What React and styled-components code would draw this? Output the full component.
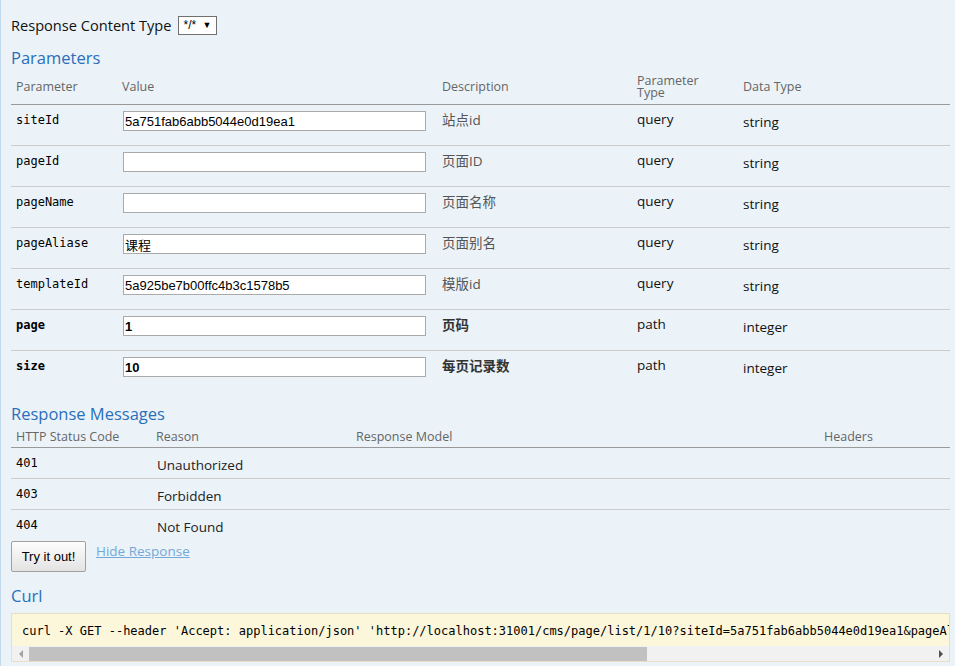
import React from 'react';
import styled, { createGlobalStyle } from 'styled-components';

const GlobalStyle = createGlobalStyle`
  html, body {
    margin: 0;
    padding: 0;
    background: #ebf3f9;
  }
  body {
    font-family: "Open Sans", "Noto Sans CJK SC", sans-serif;
    color: #222;
  }
`;

const parametros = [
  { nombre: 'siteId', valor: '5a751fab6abb5044e0d19ea1', descripcion: '站点id', tipo: 'query', dato: 'string' },
  { nombre: 'pageId', valor: '', descripcion: '页面ID', tipo: 'query', dato: 'string' },
  { nombre: 'pageName', valor: '', descripcion: '页面名称', tipo: 'query', dato: 'string' },
  { nombre: 'pageAliase', valor: '课程', descripcion: '页面别名', tipo: 'query', dato: 'string' },
  { nombre: 'templateId', valor: '5a925be7b00ffc4b3c1578b5', descripcion: '模版id', tipo: 'query', dato: 'string' },
  { nombre: 'page', valor: '1', descripcion: '页码', tipo: 'path', dato: 'integer', requerido: true },
  { nombre: 'size', valor: '10', descripcion: '每页记录数', tipo: 'path', dato: 'integer', requerido: true },
];

const respuestas = [
  { codigo: '401', razon: 'Unauthorized' },
  { codigo: '403', razon: 'Forbidden' },
  { codigo: '404', razon: 'Not Found' },
];

const curl = "curl -X GET --header 'Accept: application/json' 'http://localhost:31001/cms/page/list/1/10?siteId=5a751fab6abb5044e0d19ea1&pageAliase=%E8%AF%BE%E7%A8%8B&templateId=5a925be7b00ffc4b3c1578b5'";

function App() {
  return (
    <>
      <GlobalStyle />
      <Operacion>

        <TipoContenido>
          <span>Response Content Type</span>
          <Selector>
            <SelectorValor>*/*</SelectorValor>
            <SelectorFlecha>▼</SelectorFlecha>
          </Selector>
        </TipoContenido>

        <Titulo $arriba={10}>Parameters</Titulo>
        <FilaParametroCabecera>
          <CeldaCabecera>Parameter</CeldaCabecera>
          <CeldaCabecera>Value</CeldaCabecera>
          <CeldaCabecera>Description</CeldaCabecera>
          <CeldaCabecera>Parameter<br />Type</CeldaCabecera>
          <CeldaCabecera>Data Type</CeldaCabecera>
        </FilaParametroCabecera>

        {parametros.map((p, i) => (
          <FilaParametro key={p.nombre} $ultima={i === parametros.length - 1}>
            <NombreParametro $requerido={p.requerido}>{p.nombre}</NombreParametro>
            <Celda>
              <CampoValor defaultValue={p.valor} $requerido={p.requerido} />
            </Celda>
            <Descripcion $requerido={p.requerido}>{p.descripcion}</Descripcion>
            <CeldaTexto>{p.tipo}</CeldaTexto>
            <CeldaTexto $bajar>{p.dato}</CeldaTexto>
          </FilaParametro>
        ))}

        <Titulo $arriba={12}>Response Messages</Titulo>
        <FilaRespuestaCabecera>
          <CeldaCabecera>HTTP Status Code</CeldaCabecera>
          <CeldaCabecera>Reason</CeldaCabecera>
          <CeldaCabecera>Response Model</CeldaCabecera>
          <CeldaCabecera>Headers</CeldaCabecera>
        </FilaRespuestaCabecera>

        {respuestas.map((r, i) => (
          <FilaRespuesta key={r.codigo} $ultima={i === respuestas.length - 1}>
            <CodigoRespuesta>{r.codigo}</CodigoRespuesta>
            <RazonRespuesta>{r.razon}</RazonRespuesta>
            <div />
            <div />
          </FilaRespuesta>
        ))}

        <Acciones>
          <BotonProbar>Try it out!</BotonProbar>
          <EnlaceOcultar href="#">Hide Response</EnlaceOcultar>
        </Acciones>

        <Titulo $arriba={13}>Curl</Titulo>
        <CajaCurl>
          <CodigoCurl>{curl}</CodigoCurl>
          <BarraDesplazamiento>
            <BotonBarra><Flecha $direccion="izquierda" /></BotonBarra>
            <PulgarBarra />
            <BotonBarra><Flecha $direccion="derecha" /></BotonBarra>
          </BarraDesplazamiento>
        </CajaCurl>

      </Operacion>
    </>
  );
}


const Operacion = styled.div`
  box-sizing: border-box;
  min-height: 100vh;
  padding: 13px 0 0 10px;
  border-left: 1px solid #c3d9ec;
  overflow: hidden;
`;

const TipoContenido = styled.div`
  display: flex;
  align-items: center;
  gap: 6px;
  height: 24px;
  font-size: 14.6px;
  color: #111;
`;

const Selector = styled.div`
  display: flex;
  align-items: center;
  box-sizing: border-box;
  height: 19px;
  width: 39px;
  padding: 0 4px 0 5px;
  border: 1px solid #707070;
  background: #fff;
  font-family: "Liberation Sans", Arial, sans-serif;
  font-size: 12px;
  color: #000;
`;

const SelectorValor = styled.span`
  flex: 1;
`;

const SelectorFlecha = styled.span`
  font-size: 9px;
`;

const Titulo = styled.h4`
  margin: ${p => p.$arriba}px 0 0 0;
  font-size: 16.5px;
  font-weight: normal;
  line-height: 22px;
  color: #2a6fbb;
`;

const columnasParametros = '106px 320px 195px 106px 1fr';
const columnasRespuestas = '140px 200px 468px 1fr';

const FilaParametroCabecera = styled.div`
  display: grid;
  grid-template-columns: ${columnasParametros};
  align-items: center;
  height: 35px;
  margin-right: 5px;
  border-bottom: 1px solid #999;
`;

const FilaRespuestaCabecera = styled.div`
  display: grid;
  grid-template-columns: ${columnasRespuestas};
  align-items: end;
  box-sizing: border-box;
  height: 23px;
  padding-bottom: 4px;
  margin-right: 5px;
  border-bottom: 1px solid #999;
`;

const CeldaCabecera = styled.div`
  padding-left: 5px;
  font-size: 12.5px;
  line-height: 12px;
  color: #666;
`;

const FilaParametro = styled.div`
  display: grid;
  grid-template-columns: ${columnasParametros};
  align-items: start;
  height: 40px;
  margin-right: 5px;
  border-bottom: ${p => (p.$ultima ? 'none' : '1px solid #ccc')};
`;

const Celda = styled.div`
  padding: 6px 0 0 5px;
`;

const NombreParametro = styled.div`
  padding: 7px 0 0 5px;
  font-family: "DejaVu Sans Mono", "Liberation Mono", monospace;
  font-size: 12px;
  line-height: 16px;
  font-weight: ${p => (p.$requerido ? 'bold' : 'normal')};
  color: #000;
`;

const CampoValor = styled.input`
  box-sizing: border-box;
  display: block;
  width: 303px;
  height: 20px;
  margin-left: 1px;
  padding: 0 1px;
  border: 1px solid #aaa;
  background: #fff;
  outline: none;
  font-family: "Liberation Sans", Arial, "Noto Sans CJK SC", sans-serif;
  font-size: 13px;
  font-weight: ${p => (p.$requerido ? 'bold' : 'normal')};
  color: #000;
`;

const Descripcion = styled.div`
  padding: 7px 0 0 5px;
  font-size: 13.5px;
  line-height: 16px;
  font-weight: ${p => (p.$requerido ? 'bold' : 'normal')};
  color: ${p => (p.$requerido ? '#333' : '#555')};
`;

const CeldaTexto = styled.div`
  padding: ${p => (p.$bajar ? '9px' : '6px')} 0 0 5px;
  font-size: 13.5px;
  line-height: 16px;
  color: #111;
`;

const FilaRespuesta = styled.div`
  display: grid;
  grid-template-columns: ${columnasRespuestas};
  align-items: center;
  height: 30px;
  margin-right: 5px;
  border-bottom: ${p => (p.$ultima ? 'none' : '1px solid #ccc')};
`;

const CodigoRespuesta = styled.div`
  padding: 0 0 0 5px;
  font-family: "DejaVu Sans Mono", "Liberation Mono", monospace;
  font-size: 12px;
  color: #000;
`;

const RazonRespuesta = styled.div`
  padding: 4px 0 0 6px;
  font-size: 13.5px;
  color: #222;
`;

const Acciones = styled.div`
  display: flex;
  align-items: flex-start;
  gap: 10px;
  margin-top: 1px;
`;

const BotonProbar = styled.button`
  box-sizing: border-box;
  width: 75px;
  height: 31px;
  padding: 0;
  border: 1px solid #a0a0a0;
  border-radius: 2px;
  background: linear-gradient(#fdfdfd, #e3e3e3);
  font-family: "Liberation Sans", Arial, sans-serif;
  font-size: 13px;
  color: #000;
`;

const EnlaceOcultar = styled.a`
  margin-top: 1px;
  font-size: 13.5px;
  color: #74a8d8;
  text-decoration: underline;
`;

const CajaCurl = styled.div`
  margin: 6px 5px 0 0;
  border: 1px solid #e6e0c4;
  background: #fcf6db;
`;

const CodigoCurl = styled.pre`
  margin: 0;
  padding: 9px 0 7px 10px;
  overflow: hidden;
  white-space: pre;
  font-family: "DejaVu Sans Mono", "Liberation Mono", monospace;
  font-size: 12px;
  line-height: 16px;
  color: #000;
`;

const BarraDesplazamiento = styled.div`
  display: flex;
  height: 15px;
  background: #f1f1f1;
`;

const BotonBarra = styled.div`
  display: flex;
  align-items: center;
  justify-content: center;
  width: 17px;
  flex: none;
`;

const PulgarBarra = styled.div`
  width: 618px;
  margin: 1px auto 0 0;
  background: #c1c1c1;
`;

const Flecha = styled.span`
  width: 0;
  height: 0;
  border-top: 4px solid transparent;
  border-bottom: 4px solid transparent;
  ${p => (p.$direccion === 'izquierda'
    ? 'border-right: 4px solid #a3a3a3;'
    : 'border-left: 4px solid #505050;')}
`;

export default App
